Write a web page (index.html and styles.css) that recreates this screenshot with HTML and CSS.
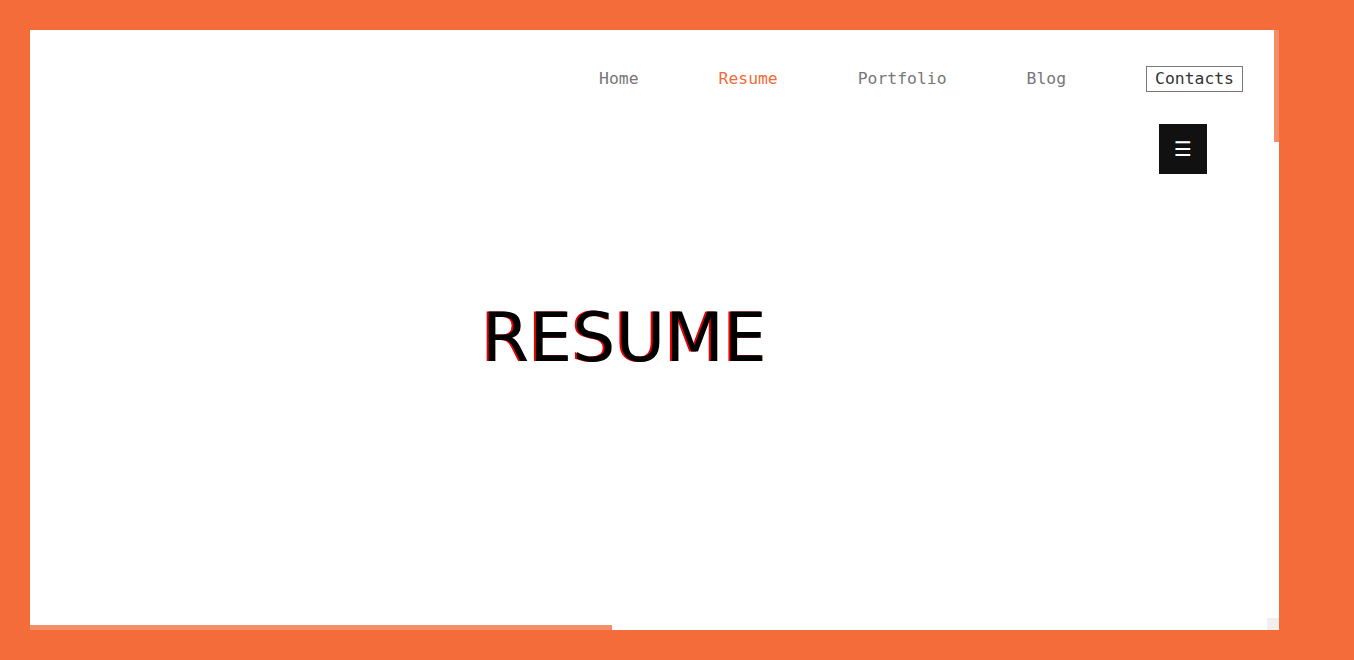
FILE: index.html
```html
<!DOCTYPE html>
<html lang="en">
<head>
<meta charset="utf-8">
<title>Resume</title>
<link rel="stylesheet" href="styles.css">
</head>
<body>
<div class="frame">
  <main class="panel">
    <header class="header">
      <nav class="nav">
        <a class="nav-link" href="#">Home</a>
        <a class="nav-link active" href="#">Resume</a>
        <a class="nav-link" href="#">Portfolio</a>
        <a class="nav-link" href="#">Blog</a>
        <a class="nav-link boxed" href="#">Contacts</a>
      </nav>
      <div class="menu-row">
        <button class="menu-btn" type="button">&#9776;</button>
      </div>
    </header>
    <section class="hero">
      <h1 class="title">RESUME</h1>
    </section>
    <div class="thumb-v"></div>
    <div class="thumb-h"></div>
    <div class="corner"></div>
  </main>
</div>
</body>
</html>
```
FILE: styles.css
```css
* { box-sizing: border-box; }
html, body { margin: 0; padding: 0; }
body {
  background: #f36c3a;
  width: 1354px;
  height: 660px;
  overflow: hidden;
}
.frame {
  padding: 30px 75px 30px 30px;
}
.panel {
  position: relative;
  background: #fff;
  width: 1249px;
  height: 600px;
  display: flex;
  flex-direction: column;
}
.header {
  display: flex;
  flex-direction: column;
  align-items: flex-end;
  padding-top: 36px;
}
.nav {
  display: flex;
  align-items: center;
  gap: 80px;
  padding-right: 36px;
  font-family: "DejaVu Sans Mono", "Liberation Mono", monospace;
  font-size: 16.4px;
}
.nav-link {
  color: #777;
  text-decoration: none;
  line-height: 24px;
}
.nav-link.active { color: #f36c3a; }
.nav-link.boxed {
  color: #333;
  border: 1px solid #777;
  padding: 0 8px;
}
.menu-row {
  margin-top: 32px;
  padding-right: 72px;
}
.menu-btn {
  width: 48px;
  height: 50px;
  background: #111;
  color: #fff;
  border: none;
  font-family: "DejaVu Sans", sans-serif;
  font-size: 20px;
  line-height: 50px;
  padding: 0;
  display: block;
}
.hero {
  padding-left: 452px;
  padding-top: 124px;
}
.title {
  margin: 0;
  font-family: "DejaVu Sans", sans-serif;
  font-weight: normal;
  font-size: 68px;
  line-height: 80px;
  color: #000;
  text-shadow: -2px 0 #e00;
}
.thumb-v {
  position: absolute;
  right: 0;
  top: 0;
  width: 5px;
  height: 112px;
  background: #f48e68;
}
.thumb-h {
  position: absolute;
  left: 0;
  bottom: 0;
  width: 582px;
  height: 5px;
  background: #f48e68;
}
.corner {
  position: absolute;
  right: 0;
  bottom: 0;
  width: 12px;
  height: 12px;
  background: #f0efed;
}
```
